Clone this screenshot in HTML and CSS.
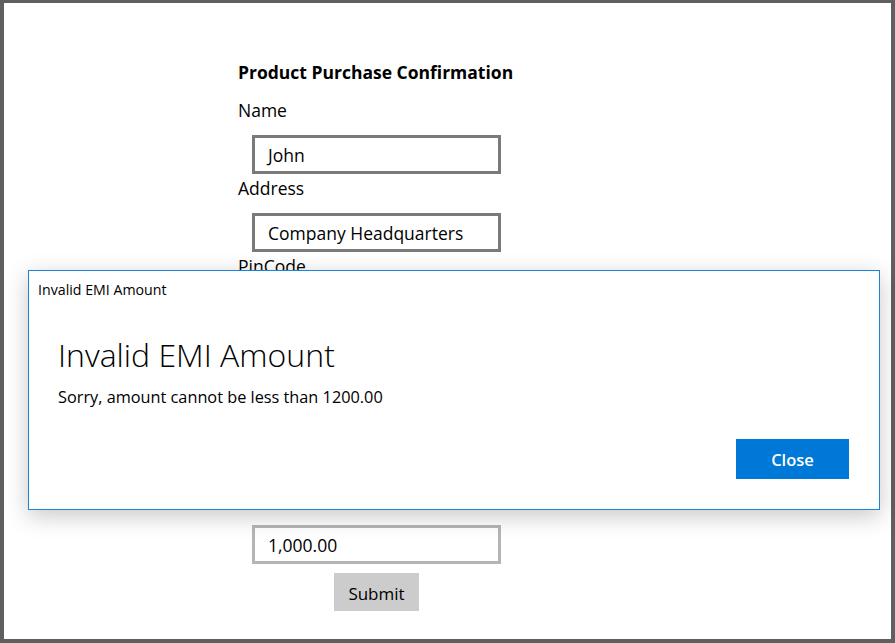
FILE: index.html
```html
<!DOCTYPE html>
<html lang="en">
<head>
<meta charset="utf-8">
<title>Product Purchase Confirmation</title>
<link rel="stylesheet" href="styles.css">
</head>
<body>
<div class="window">
  <form class="form">
    <div class="heading">Product Purchase Confirmation</div>
    <div class="label">Name</div>
    <div class="field">John</div>
    <div class="label">Address</div>
    <div class="field">Company Headquarters</div>
    <div class="label">PinCode</div>
    <div class="field"></div>
    <div class="label"></div>
    <div class="field"></div>
    <div class="label"></div>
    <div class="field"></div>
    <div class="label"></div>
    <div class="field field-dim">1,000.00</div>
    <div class="actions"><button type="button" class="submit">Submit</button></div>
  </form>
  <div class="dialog">
    <div class="dialog-caption">Invalid EMI Amount</div>
    <div class="dialog-body">
      <div class="dialog-title">Invalid EMI Amount</div>
      <div class="dialog-message">Sorry, amount cannot be less than 1200.00</div>
    </div>
    <div class="dialog-footer"><button type="button" class="close">Close</button></div>
  </div>
</div>
</body>
</html>
```

FILE: styles.css
```css
* { box-sizing: border-box; }
html, body { margin: 0; padding: 0; }
body {
  width: 895px;
  height: 643px;
  background: #5f5f5f;
  padding: 3px 4px 4px 4px;
  font-family: "Open Sans", "Noto Sans", sans-serif;
  color: #000;
  overflow: hidden;
}
.window {
  position: relative;
  width: 100%;
  height: 100%;
  background: #fff;
}
.form {
  display: flex;
  flex-direction: column;
  align-items: flex-start;
  padding: 57px 0 0 234px;
}
.heading {
  font-weight: 700;
  font-size: 17.5px;
  line-height: 24px;
  margin-bottom: 14px;
}
.label {
  font-size: 17.5px;
  line-height: 24px;
  min-height: 24px;
}
.field {
  width: 249px;
  height: 39px;
  margin: 13px 0 2px 14px;
  border: 3px solid #7a7a7a;
  padding: 0 13px;
  font-size: 17.5px;
  line-height: 35px;
}
.field-dim { border-color: #b5b5b5; }
.actions {
  width: 277px;
  display: flex;
  justify-content: center;
  margin-top: 7px;
}
.submit {
  width: 85px;
  height: 38px;
  border: none;
  background: #cccccc;
  font-family: inherit;
  font-size: 17px;
  color: #000;
  padding: 2px 0 0;
}
.dialog {
  position: absolute;
  left: 24px;
  top: 267px;
  width: 852px;
  height: 240px;
  background: #fff;
  border: 1px solid #1a84d8;
  box-shadow: 0 6px 22px rgba(0,0,0,0.22);
  display: flex;
  flex-direction: column;
}
.dialog-caption {
  font-size: 14.2px;
  line-height: 18px;
  padding: 10px 9px 0;
}
.dialog-body {
  padding: 36px 29px 0;
}
.dialog-title {
  font-size: 32px;
  font-weight: 300;
  line-height: 40px;
}
.dialog-message {
  font-size: 16.3px;
  line-height: 22px;
  margin-top: 11px;
}
.dialog-footer {
  margin-top: auto;
  display: flex;
  justify-content: flex-end;
  padding: 0 30px 30px;
}
.close {
  width: 113px;
  height: 40px;
  border: none;
  background: #0078d7;
  color: #fff;
  font-family: inherit;
  font-size: 16.5px;
  font-weight: 600;
  padding: 0;
}
```
